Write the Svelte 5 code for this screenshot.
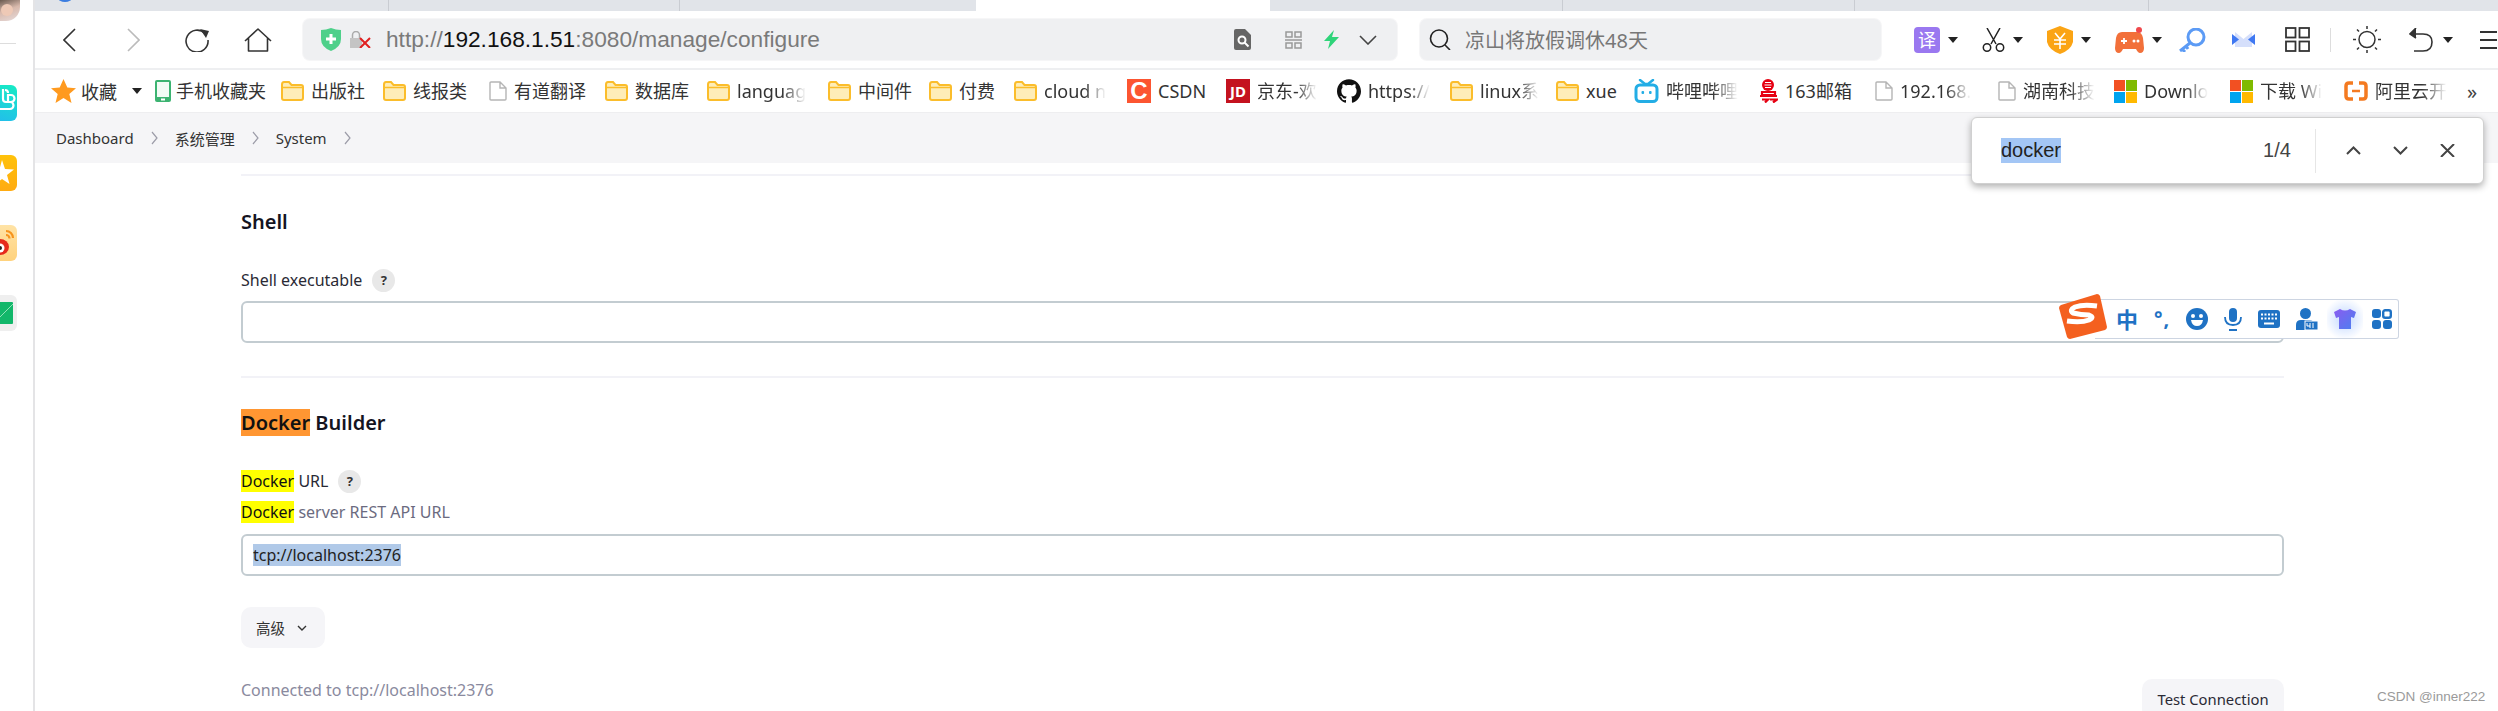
<script lang="ts">
	const bookmarks = [
		{ icon: 'phone', label: '手机收藏夹', w: 126 },
		{ icon: 'folder', label: '出版社', w: 102 },
		{ icon: 'folder', label: '线报类', w: 106 },
		{ icon: 'file', label: '有道翻译', w: 116 },
		{ icon: 'folder', label: '数据库', w: 102 },
		{ icon: 'folder', label: 'languag', w: 121, fade: true },
		{ icon: 'folder', label: '中间件', w: 101 },
		{ icon: 'folder', label: '付费', w: 85 },
		{ icon: 'folder', label: 'cloud n', w: 113, fade: true },
		{ icon: 'csdn', label: 'CSDN', w: 99 },
		{ icon: 'jd', label: '京东-欢', w: 111, fade: true },
		{ icon: 'github', label: 'https://', w: 113, fade: true },
		{ icon: 'folder', label: 'linux系', w: 106, fade: true },
		{ icon: 'folder', label: 'xue', w: 78 },
		{ icon: 'bili', label: '哔哩哔哩', w: 125, fade: true },
		{ icon: 'mail163', label: '163邮箱', w: 116 },
		{ icon: 'file', label: '192.168.', w: 123, fade: true },
		{ icon: 'file', label: '湖南科技', w: 116, fade: true },
		{ icon: 'ms', label: 'Downlo', w: 116, fade: true },
		{ icon: 'ms', label: '下载 Wi', w: 114, fade: true },
		{ icon: 'ali', label: '阿里云开', w: 125, fade: true }
	];
</script>

{#snippet caret()}
	<svg class="caret" width="10" height="6" viewBox="0 0 10 6"><path d="M0 0h10L5 6z" fill="#222" /></svg>
{/snippet}

{#snippet bookmarkIcon(kind: string)}
	{#if kind === 'folder'}
		<svg width="23" height="20" viewBox="0 0 23 20">
			<path d="M1 3.500Q1 1 3 1h5l2.500 3H20q2 0 2 2v11q0 2-2 2H3q-2 0-2-2z" fill="#feedb8" stroke="#fbbd2b" stroke-width="2" />
			<path d="M1 6.500h21" stroke="#fbbd2b" stroke-width="1.500" />
		</svg>
	{:else if kind === 'file'}
		<svg width="18" height="20" viewBox="0 0 18 20">
			<path d="M1 2q0-1 1-1h9l6 6v11q0 1-1 1H2q-1 0-1-1z M11 1v6h6" fill="#fff" stroke="#b5b5b5" stroke-width="1.400" />
		</svg>
	{:else if kind === 'phone'}
		<svg width="16" height="22" viewBox="0 0 16 22">
			<rect width="16" height="22" rx="2" fill="#3cb371" />
			<rect x="2" y="2" width="12" height="15" fill="#f2fbf5" />
			<rect x="6" y="18.500" width="4" height="2" fill="#fff" />
		</svg>
	{:else if kind === 'csdn'}
		<div class="tile csdn">C</div>
	{:else if kind === 'jd'}
		<div class="tile jd">JD</div>
	{:else if kind === 'github'}
		<svg width="24" height="24" viewBox="0 0 24 24"><path fill="#111" d="M12 .297c-6.63 0-12 5.373-12 12 0 5.303 3.438 9.8 8.205 11.385.6.113.82-.258.82-.577 0-.285-.01-1.04-.015-2.04-3.338.724-4.042-1.61-4.042-1.61C4.422 18.07 3.633 17.7 3.633 17.7c-1.087-.744.084-.729.084-.729 1.205.084 1.838 1.236 1.838 1.236 1.07 1.835 2.809 1.305 3.495.998.108-.776.417-1.305.76-1.605-2.665-.3-5.466-1.332-5.466-5.93 0-1.31.465-2.38 1.235-3.22-.135-.303-.54-1.523.105-3.176 0 0 1.005-.322 3.3 1.23.96-.267 1.98-.399 3-.405 1.02.006 2.04.138 3 .405 2.28-1.552 3.285-1.23 3.285-1.23.645 1.653.24 2.873.12 3.176.765.84 1.23 1.91 1.23 3.22 0 4.61-2.805 5.625-5.475 5.92.42.36.81 1.096.81 2.22 0 1.606-.015 2.896-.015 3.286 0 .315.21.69.825.57C20.565 22.092 24 17.592 24 12.297c0-6.627-5.373-12-12-12" /></svg>
	{:else if kind === 'bili'}
		<svg width="25" height="24" viewBox="0 0 25 24">
			<path d="M6 1l5 4h3l5-4" fill="none" stroke="#23ade5" stroke-width="2.500" stroke-linecap="round" />
			<rect x="2" y="6" width="21" height="16.500" rx="4" fill="#fff" stroke="#23ade5" stroke-width="3" />
			<rect x="7.500" y="12" width="2.600" height="3" rx="1" fill="#23ade5" />
			<rect x="15" y="12" width="2.600" height="3" rx="1" fill="#23ade5" />
		</svg>
	{:else if kind === 'mail163'}
		<svg width="19" height="24" viewBox="0 0 19 24">
			<circle cx="9" cy="6" r="6" fill="#e60012" />
			<path d="M5.500 6h7M6 8.500h6M6 3.500h6" stroke="#fff" stroke-width="1.200" />
			<path d="M3 13h13v3H3zM1 17h17M3 20.500h6l-3 3M11 20.500h7l-4 3" fill="none" stroke="#e60012" stroke-width="2.200" />
		</svg>
	{:else if kind === 'ms'}
		<svg width="23" height="23" viewBox="0 0 23 23">
			<rect width="11" height="11" fill="#f25022" />
			<rect x="12" width="11" height="11" fill="#7fba00" />
			<rect y="12" width="11" height="11" fill="#00a4ef" />
			<rect x="12" y="12" width="11" height="11" fill="#ffb900" />
		</svg>
	{:else if kind === 'ali'}
		<svg width="24" height="22" viewBox="0 0 24 22">
			<path d="M9 3H5Q2 3 2 6v10q0 3 3 3h4M15 3h4q3 0 3 3v10q0 3-3 3h-4" fill="none" stroke="#f47a20" stroke-width="3.500" />
			<path d="M8 11h8" stroke="#f47a20" stroke-width="2.500" />
		</svg>
	{/if}
{/snippet}

<div class="shell">
	<aside class="rail">
		<div class="avatar"><div class="face"></div></div>
		<div class="rail-rule"></div>
		<div class="rail-apps">
			<div class="app-tile cyan">
				<svg width="17" height="36" viewBox="0 0 17 36" fill="none" stroke="#fff" stroke-width="2.200">
					<path d="M3 4v10a3 3 0 0 0 3 3h4a3 3 0 0 1 0 7H0" />
					<path d="M8 8q0-3-3-3M10 17h1a3.500 3.500 0 0 0 0-7H8v7" />
				</svg>
			</div>
			<div class="app-tile amber">
				<svg width="17" height="36" viewBox="0 0 17 36"><path d="M2 5l3 9 9 .5-7 5.500 2.500 9L2 24l-7 5 2.500-9-7-5.500 9-.5z" fill="#fff" /></svg>
			</div>
			<div class="app-tile peach">
				<svg width="17" height="36" viewBox="0 0 17 36">
					<path d="M6 6a7 7 0 0 1 7 7M6 10a3.500 3.500 0 0 1 3.500 3.500" fill="none" stroke="#f7941d" stroke-width="2.200" />
					<ellipse cx="0" cy="22" rx="9" ry="8" fill="#e6291b" />
					<circle cx="0" cy="23" r="4.500" fill="#fff" />
					<circle cx="0" cy="23" r="2" fill="#222" />
				</svg>
			</div>
			<div class="app-tile pale">
				<svg width="13" height="22" viewBox="0 0 13 22">
					<path d="M0 0h12q1 0 1 1v20q0 1-1 1H0z" fill="#12b76a" />
					<path d="M0 15L13 2" stroke="#8fe3b8" stroke-width="1" />
				</svg>
			</div>
		</div>
	</aside>

	<div class="browser">
		<div class="tabstrip">
			<span class="tab-dot"></span>
			<span class="tab grey" style="width: 354px"></span>
			<span class="tab grey" style="width: 291px"></span>
			<span class="tab plain" style="width: 296px"></span>
			<span class="tab active"></span>
			<span class="tab grey" style="width: 293px"></span>
			<span class="tab grey" style="width: 292px"></span>
			<span class="tab grey" style="width: 294px"></span>
		</div>

		<div class="toolbar">
			<div class="nav">
				<svg class="back" width="13" height="24" viewBox="0 0 13 24"><path d="M12 1L1 12l11 11" fill="none" stroke="#333" stroke-width="1.600" /></svg>
				<svg class="forward" width="13" height="24" viewBox="0 0 13 24"><path d="M1 1l11 11L1 23" fill="none" stroke="#bbb" stroke-width="1.600" /></svg>
				<svg class="reload" width="25" height="24" viewBox="0 0 25 24">
					<path d="M20 5.500A11 11 0 1 0 23 12" fill="none" stroke="#333" stroke-width="1.600" />
					<path d="M15 1l9 2-3 7z" fill="#333" />
				</svg>
				<svg class="home" width="28" height="24" viewBox="0 0 28 24"><path d="M1 13L14 1l13 12M4.500 10v13h19V10" fill="none" stroke="#333" stroke-width="1.600" stroke-linejoin="round" /></svg>
			</div>

			<div class="urlbar">
				<svg class="shield" width="20" height="23" viewBox="0 0 20 23">
					<path d="M0 2q5 0 10-2 5 2 10 2v9q0 8-10 12Q0 19 0 11z" fill="#4ed08a" />
					<path d="M10 6v10M5 11h10" stroke="#fff" stroke-width="3" />
				</svg>
				<svg class="lock" width="21" height="17" viewBox="0 0 21 17">
					<rect x="0" y="7" width="12" height="10" fill="#c4c4c4" />
					<path d="M2.500 7V4a3.500 3.500 0 0 1 7 0v3" fill="none" stroke="#aaa" stroke-width="1.500" />
					<path d="M10 7l10 10M20 7L10 17" stroke="#e02020" stroke-width="2" />
				</svg>
				<span class="url"><span class="dim">http://</span><span class="host">192.168.1.51</span><span class="dim">:8080/manage/configure</span></span>
				<div class="url-tools">
					<svg width="17" height="21" viewBox="0 0 17 21">
						<path d="M0 2q0-2 2-2h9l6 6v13q0 2-2 2H2q-2 0-2-2z" fill="#666" />
						<circle cx="8" cy="11" r="3.500" fill="none" stroke="#fff" stroke-width="2" />
						<path d="M10.500 13.500l4 4" stroke="#fff" stroke-width="2" />
					</svg>
					<svg width="17" height="18" viewBox="0 0 17 18" fill="none" stroke="#999" stroke-width="1.500">
						<rect x="1" y="1" width="6" height="5" />
						<rect x="10" y="1" width="6" height="5" />
						<path d="M0 9h17" />
						<rect x="1" y="12" width="6" height="5" />
						<rect x="10" y="12" width="6" height="5" />
					</svg>
					<svg width="15" height="19" viewBox="0 0 15 19"><path d="M10 0L0 11h6l-2 8 11-12H8z" fill="#2fd47a" /></svg>
					<svg width="18" height="10" viewBox="0 0 18 10"><path d="M1 1l8 8 8-8" fill="none" stroke="#444" stroke-width="1.600" /></svg>
				</div>
			</div>

			<div class="searchbar">
				<svg width="23" height="21" viewBox="0 0 23 21" fill="none" stroke="#222" stroke-width="1.600">
					<ellipse cx="10" cy="9.500" rx="8.500" ry="8.500" />
					<path d="M16 16l5 5" />
				</svg>
				<span>凉山将放假调休48天</span>
			</div>

			<div class="extensions">
				<div class="ext-item">
					<div class="ext-translate">译</div>
					{@render caret()}
				</div>
				<div class="ext-item">
					<svg width="23" height="24" viewBox="0 0 23 24" fill="none" stroke="#222" stroke-width="1.500">
						<path d="M5 0l9 16M18 0L9 16" />
						<circle cx="5" cy="19.500" r="3.700" />
						<circle cx="18" cy="19.500" r="3.700" />
					</svg>
					{@render caret()}
				</div>
				<div class="ext-item">
					<svg width="26" height="28" viewBox="0 0 26 28">
						<path d="M13 0l13 5v11q-2 8-13 12Q2 24 0 16V5z" fill="#fba414" />
						<path d="M8 7l5 6 5-6M7 14h12M7 18h12M13 13v10" fill="none" stroke="#fff" stroke-width="1.600" />
					</svg>
					{@render caret()}
				</div>
				<div class="ext-item">
					<svg width="29" height="26" viewBox="0 0 29 26">
						<path d="M7 5h15q5 0 6 6l1 10q0 5-4 5-2 0-4-4H8q-2 4-4 4-4 0-4-5l1-10q1-6 6-6z" fill="#f2703a" />
						<circle cx="24" cy="3" r="3" fill="#f0484c" />
						<path d="M6 14h6M9 11v6" stroke="#fff" stroke-width="1.800" />
						<circle cx="19" cy="14" r="1.500" fill="#fff" />
						<circle cx="23" cy="14" r="1.500" fill="#fff" />
					</svg>
					{@render caret()}
				</div>
				<svg class="ext-key" width="28" height="24" viewBox="0 0 28 24" fill="none" stroke="#5c9bf5" stroke-width="3">
					<circle cx="18" cy="9" r="8" />
					<path d="M12 15L2 23M4 21l3 3M8 18l2 3" />
				</svg>
				<svg class="ext-bow" width="23" height="15" viewBox="0 0 23 15">
					<path d="M3 0l8.500 7L20 0v15H3z" fill="#d5dffb" />
					<path d="M0 2l7 5.500L0 13z" fill="#3f78f2" />
					<path d="M23 2l-7 5.500 7 5.500z" fill="#3f78f2" />
				</svg>
				<svg class="ext-grid" width="25" height="25" viewBox="0 0 25 25" fill="none" stroke="#333" stroke-width="1.800">
					<rect x="1" y="1" width="9.500" height="9.500" />
					<rect x="14.500" y="1" width="9.500" height="9.500" />
					<rect x="1" y="14.500" width="9.500" height="9.500" />
					<rect x="14.500" y="14.500" width="9.500" height="9.500" />
				</svg>
				<span class="ext-sep"></span>
				<svg class="ext-sun" width="28" height="27" viewBox="0 0 28 27" fill="none" stroke="#333" stroke-width="1.500">
					<circle cx="14" cy="13.500" r="8" />
					<path d="M14 0v3M14 24v3M0 13.500h3M25 13.500h3M4 3.500l2 2M22 21.500l2 2M24 3.500l-2 2M6 21.500l-2 2" />
				</svg>
				<div class="ext-item undo">
					<svg width="26" height="24" viewBox="0 0 26 24" fill="none" stroke="#333" stroke-width="1.600">
						<path d="M2 6h12q9 0 9 8 0 9-9 9H5" />
						<path d="M7 0L1 6l6 4" fill="#333" />
					</svg>
					{@render caret()}
				</div>
				<div class="ext-menu"><span></span><span></span><span></span></div>
			</div>
		</div>

		<div class="bookmarks">
			<div class="bm-favorites">
				<svg width="25" height="24" viewBox="0 0 25 24"><path d="M12.500 0l3.800 8.600 8.700.6-6.700 5.700 2.200 9.100-8-4.900-8 4.900 2.200-9.100L0 9.200l8.700-.6z" fill="#ff9a1f" /></svg>
				<span>收藏</span>
				{@render caret()}
			</div>
			{#each bookmarks as b}
				<div class="bm" style="width: {b.w}px">
					<span class="bm-icon" class:tight={b.icon === 'phone'}>{@render bookmarkIcon(b.icon)}</span>
					<span class="bm-label" class:fade={b.fade}>{b.label}</span>
				</div>
			{/each}
			<span class="bm-more">»</span>
		</div>

		<div class="breadcrumbs">
			<span>Dashboard</span>
			<svg width="7" height="14" viewBox="0 0 7 14"><path d="M1 1l5 6-5 6" fill="none" stroke="#9c9ca8" stroke-width="1.200" /></svg>
			<span>系统管理</span>
			<svg width="7" height="14" viewBox="0 0 7 14"><path d="M1 1l5 6-5 6" fill="none" stroke="#9c9ca8" stroke-width="1.200" /></svg>
			<span>System</span>
			<svg width="7" height="14" viewBox="0 0 7 14"><path d="M1 1l5 6-5 6" fill="none" stroke="#9c9ca8" stroke-width="1.200" /></svg>
		</div>

		<main class="config">
			<div class="top-rule"></div>

			<h2 class="heading">Shell</h2>
			<div class="label-row">
				<span>Shell executable</span>
				<span class="help">?</span>
			</div>
			<div class="field"></div>

			<div class="section-rule"></div>

			<h2 class="heading second"><mark class="current">Docker</mark> Builder</h2>
			<div class="label-row">
				<span><mark>Docker</mark> URL</span>
				<span class="help">?</span>
			</div>
			<div class="description"><mark>Docker</mark> server REST API URL</div>
			<div class="field filled"><span class="selected">tcp://localhost:2376</span></div>

			<button class="advanced">
				高级
				<svg width="10" height="6" viewBox="0 0 10 6"><path d="M1 1l4 4 4-4" fill="none" stroke="#333" stroke-width="1.400" /></svg>
			</button>

			<div class="status-row">
				<span class="status">Connected to tcp://localhost:2376</span>
				<button class="test">Test Connection</button>
			</div>
		</main>
	</div>
</div>

<div class="findbar">
	<span class="find-query">docker</span>
	<span class="find-count">1/4</span>
	<span class="find-sep"></span>
	<svg width="15" height="9" viewBox="0 0 15 9"><path d="M1 8l6.500-6.500L14 8" fill="none" stroke="#444" stroke-width="2" /></svg>
	<svg width="15" height="9" viewBox="0 0 15 9"><path d="M1 1l6.500 6.500L14 1" fill="none" stroke="#444" stroke-width="2" /></svg>
	<svg width="15" height="13" viewBox="0 0 15 13"><path d="M1 0l13 13M14 0L1 13" stroke="#444" stroke-width="2" /></svg>
</div>

<div class="ime">
	<svg class="ime-logo" width="48" height="46" viewBox="0 0 48 46">
		<path d="M2 11L38 0q2 0 3 2l7 31q0 2-2 3L11 45q-2 0-3-2L0 14q0-2 2-3z" fill="#f4601f" />
		<path d="M38 12q-14-2-22 1-6 3-2 6 8 2 16 2 6 2 0 5-8 3-22 1" fill="none" stroke="#fff" stroke-width="5" />
	</svg>
	<span class="ime-zh">中</span>
	<span class="ime-punct">°,</span>
	<svg width="22" height="22" viewBox="0 0 22 22">
		<circle cx="11" cy="11" r="11" fill="#1f72c4" />
		<circle cx="7" cy="8" r="2" fill="#fff" />
		<circle cx="15" cy="8" r="2" fill="#fff" />
		<path d="M5 12h12q-1 6-6 6t-6-6z" fill="#fff" />
	</svg>
	<svg width="18" height="23" viewBox="0 0 18 23">
		<rect x="5" y="0" width="8" height="14" rx="4" fill="#1f72c4" />
		<path d="M1 9q0 8 8 8t8-8" fill="none" stroke="#1f72c4" stroke-width="1.800" />
		<path d="M5 22h8" stroke="#1f72c4" stroke-width="2" />
	</svg>
	<svg width="22" height="18" viewBox="0 0 22 18">
		<rect width="22" height="18" rx="3" fill="#1f72c4" />
		<path d="M3 4.500h16M3 8.500h16" stroke="#fff" stroke-width="2" stroke-dasharray="2 1.500" />
		<path d="M6 13.500h10" stroke="#fff" stroke-width="2" />
	</svg>
	<svg width="22" height="22" viewBox="0 0 22 22">
		<circle cx="9.500" cy="5.500" r="5.500" fill="#1f72c4" />
		<path d="M0 22v-5q0-5 5-5h9q3 0 3 3v7z" fill="#1f72c4" />
		<rect x="9" y="13" width="13" height="9" fill="#1f72c4" stroke="#fff" />
		<path d="M11 15v3h3M14 15v5M17 15v5" stroke="#fff" stroke-width="1" fill="none" />
	</svg>
	<div class="ime-skin">
		<svg width="22" height="20" viewBox="0 0 22 20">
			<defs><linearGradient id="shirt" x1="0" y1="0" x2="1" y2="1"><stop offset="0" stop-color="#8b5cf0" /><stop offset="1" stop-color="#4a80f0" /></linearGradient></defs>
			<path d="M0 3l6-3q5 3 10 0l6 3-2 6-3-1v12H5V8L2 9z" fill="url(#shirt)" />
		</svg>
	</div>
	<svg width="20" height="20" viewBox="0 0 20 20" fill="#1f72c4">
		<rect width="9" height="9" rx="3" />
		<rect x="11.200" y="1.200" width="7.600" height="7.600" rx="2" fill="none" stroke="#1f72c4" stroke-width="2.400" />
		<rect y="11" width="9" height="9" rx="3" />
		<rect x="11" y="11" width="9" height="9" rx="3" />
	</svg>
</div>

<div class="watermark">CSDN @inner222</div>

<style>
	:global(body) {
		margin: 0;
		width: 2498px;
		height: 711px;
		overflow: hidden;
		background: #fff;
		font-family: "Noto Sans", "Noto Sans CJK SC", sans-serif;
		color: #222;
	}

	.shell {
		display: flex;
		width: 2498px;
		height: 711px;
		overflow: hidden;
	}

	/* left rail of the browser */
	.rail {
		flex: 0 0 35px;
		box-sizing: border-box;
		border-right: 2px solid #e4e4e6;
		overflow: hidden;
	}

	.avatar {
		width: 20px;
		height: 21px;
		background: linear-gradient(160deg, #6a5a50 0%, #d8b9ac 45%, #e7dcdc 100%);
		border-radius: 0 0 14px 0;
		overflow: hidden;
	}

	.face {
		width: 12px;
		height: 12px;
		margin: 4px 0 0 1px;
		background: #eec9b6;
		border-radius: 50%;
	}

	.rail-rule {
		width: 16px;
		height: 1px;
		margin-top: 22px;
		background: #ddd;
	}

	.rail-apps {
		display: flex;
		flex-direction: column;
		gap: 34px;
		margin-top: 41px;
	}

	.app-tile {
		display: flex;
		align-items: center;
		justify-content: flex-start;
		width: 17px;
		height: 36px;
		border-radius: 0 6px 6px 0;
		overflow: hidden;
	}

	.cyan { background: linear-gradient(20deg, #22bfea, #17ecc4); }
	.amber { background: linear-gradient(180deg, #ffc20a, #ffab12); }
	.peach { background: linear-gradient(180deg, #ffe3a6, #ffd27d); }
	.pale { background: #efefef; }

	.browser {
		flex: 1;
		min-width: 0;
		display: flex;
		flex-direction: column;
	}

	.tabstrip {
		position: relative;
		display: flex;
		flex: 0 0 11px;
		background: #e1e4e9;
	}

	.tab {
		box-sizing: border-box;
		height: 11px;
	}

	.tab.grey {
		border-right: 1px solid #c9ccd2;
	}

	.tab.active {
		width: 294px;
		background: #fff;
	}

	.tab-dot {
		position: absolute;
		left: 23px;
		top: -6px;
		width: 14px;
		height: 8px;
		border-radius: 50%;
		background: #3b7de0;
	}

	/* address bar row */
	.toolbar {
		display: flex;
		align-items: center;
		flex: 0 0 57px;
		box-sizing: border-box;
		background: #fff;
	}

	.nav {
		display: flex;
		align-items: center;
		flex: 0 0 268px;
	}

	.nav .back { margin-left: 28px; }
	.nav .forward { margin-left: 51px; }
	.nav .reload { margin-left: 45px; }
	.nav .home { margin-left: 34px; }

	.urlbar {
		display: flex;
		align-items: center;
		flex: 0 0 1094px;
		box-sizing: border-box;
		height: 41px;
		padding: 0 20px 0 18px;
		background: #eff0f2;
		border-radius: 7px;
		box-shadow: 0 0 0 1px #f6f6f7;
	}

	.lock { margin-left: 9px; }

	.url {
		margin-left: 15px;
		font-size: 22.700px;
		line-height: 41px;
		white-space: nowrap;
		font-family: "Liberation Sans", sans-serif;
	}

	.dim { color: #7a7a7a; }
	.host { color: #111; }

	.url-tools {
		display: flex;
		align-items: center;
		gap: 34px;
		margin-left: auto;
	}

	.url-tools svg:nth-child(3) {
		margin-left: -12px;
	}

	.url-tools svg:nth-child(4) {
		margin-left: -14px;
	}

	.searchbar {
		display: flex;
		align-items: center;
		gap: 13px;
		flex: 0 0 461px;
		box-sizing: border-box;
		height: 41px;
		margin-left: 23px;
		padding-left: 9px;
		background: #eff0f2;
		border-radius: 7px;
		box-shadow: 0 0 0 1px #f6f6f7;
		font-size: 20px;
		color: #777;
	}

	.extensions {
		display: flex;
		align-items: center;
		margin-left: 33px;
	}

	.ext-item {
		display: flex;
		align-items: center;
		gap: 8px;
	}

	.ext-item + .ext-item {
		margin-left: 24px;
	}

	.caret {
		flex: none;
	}

	.ext-translate {
		width: 26px;
		height: 26px;
		border-radius: 4px;
		background: #9a78f0;
		color: #fff;
		font-size: 18px;
		line-height: 26px;
		text-align: center;
	}

	.ext-key { margin-left: 16px; }
	.ext-bow { margin-left: 26px; }
	.ext-grid { margin-left: 30px; }

	.ext-sep {
		width: 1px;
		height: 24px;
		margin-left: 20px;
		background: #ddd;
	}

	.ext-sun { margin-left: 22px; }
	.ext-item.undo { margin-left: 28px; }

	.ext-menu {
		display: flex;
		flex-direction: column;
		gap: 6px;
		width: 17px;
		margin-left: 27px;
	}

	.ext-menu span {
		height: 2px;
		background: #333;
	}

	/* bookmarks row */
	.bookmarks {
		display: flex;
		align-items: center;
		flex: 0 0 42px;
		margin-top: 2px;
		padding-left: 16px;
		background: #fff;
		font-size: 18px;
		white-space: nowrap;
		color: #333;
		box-shadow: 0 -2px 0 #eeeff1;
	}

	.bm-favorites {
		display: flex;
		align-items: center;
		flex: 0 0 104px;
	}

	.bm-favorites span { margin: 0 15px 0 5px; }

	.bm {
		display: flex;
		align-items: center;
		flex: none;
	}

	.bm-icon {
		display: flex;
		align-items: center;
		justify-content: center;
		flex: none;
		min-width: 16px;
		margin-right: 7px;
	}

	.bm-icon.tight {
		margin-right: 5px;
	}

	.bm-label {
		line-height: 24px;
	}

	.bm-label.fade {
		mask-image: linear-gradient(90deg, #000 65%, transparent 100%);
	}

	.tile {
		width: 24px;
		height: 24px;
		line-height: 24px;
		text-align: center;
		color: #fff;
		font-weight: 700;
	}

	.tile.csdn {
		background: #fc5531;
		font-size: 24px;
		font-family: "Liberation Sans", sans-serif;
	}

	.tile.jd {
		background: #c4121f;
		font-size: 15px;
	}

	.bm-more {
		margin-left: -2px;
		font-size: 20px;
		color: #444;
	}

	.breadcrumbs {
		display: flex;
		align-items: center;
		flex: 0 0 51px;
		box-sizing: border-box;
		padding-left: 21px;
		gap: 17px;
		background: #f5f5f7;
		border-top: 1px solid #eeeef0;
		font-size: 15px;
		color: #333;
	}

	/* page body */
	.config {
		box-sizing: border-box;
		width: 2249px;
		padding-left: 206px;
	}

	.top-rule {
		height: 2px;
		margin-top: 11px;
		background: #f2f2f7;
	}

	.heading {
		margin: 32px 0 0;
		font-size: 20px;
		line-height: 28px;
		font-weight: 600;
		color: #14141f;
	}

	.heading.second {
		margin-top: 31px;
	}

	.label-row {
		display: flex;
		align-items: center;
		gap: 10px;
		height: 24px;
		margin-top: 32px;
		font-size: 16px;
		color: #2a2a35;
	}

	.help {
		width: 23px;
		height: 23px;
		border-radius: 50%;
		background: #e8e8e8;
		color: #333;
		font-size: 13px;
		font-weight: 700;
		line-height: 23px;
		text-align: center;
	}

	mark {
		background: #ffff00;
		color: #111;
	}

	mark.current {
		background: #ff9632;
	}

	.description {
		margin-top: 9px;
		font-size: 16px;
		line-height: 20px;
		color: #6b6b80;
	}

	.field {
		box-sizing: border-box;
		height: 42px;
		margin-top: 9px;
		padding-left: 10px;
		border: 2px solid #c3ccd1;
		border-radius: 6px;
		font-size: 16px;
		line-height: 38px;
	}

	.field.filled {
		margin-top: 12px;
	}

	.selected {
		background: #b0c9e8;
		color: #222;
	}

	.section-rule {
		height: 2px;
		margin-top: 33px;
		background: #f2f2f7;
	}

	.advanced {
		display: flex;
		align-items: center;
		gap: 12px;
		box-sizing: border-box;
		height: 41px;
		margin-top: 31px;
		padding: 0 18px 0 15px;
		border: 0;
		border-radius: 10px;
		background: #f5f5f8;
		font: inherit;
		font-size: 14.500px;
		color: #333;
	}

	.status-row {
		display: flex;
		justify-content: space-between;
		margin-top: 31px;
	}

	.status {
		font-size: 16px;
		line-height: 22px;
		color: #8a8a9e;
	}

	.test {
		box-sizing: border-box;
		width: 142px;
		height: 40px;
		border: 0;
		border-radius: 10px;
		background: #f5f5f8;
		font: inherit;
		font-size: 14.800px;
		color: #2a2a35;
	}

	/* overlays */
	.findbar {
		position: absolute;
		left: 1971px;
		top: 117px;
		display: flex;
		align-items: center;
		box-sizing: border-box;
		width: 513px;
		height: 67px;
		padding-left: 29px;
		background: #fff;
		border: 1px solid #d0d0d0;
		border-radius: 6px;
		box-shadow: 0 3px 7px rgba(0, 0, 0, 0.3);
		font-family: "Liberation Sans", sans-serif;
		font-size: 20px;
		color: #444;
	}

	.find-query {
		background: #a3c6f5;
		color: #222;
		line-height: 25px;
	}

	.find-count {
		margin-left: 202px;
	}

	.find-sep {
		width: 1px;
		height: 44px;
		margin: 0 30px 0 24px;
		background: #e6e6e6;
	}

	.findbar svg + svg {
		margin-left: 32px;
	}

	.ime {
		position: absolute;
		left: 2095px;
		top: 299px;
		display: flex;
		align-items: center;
		gap: 16px;
		box-sizing: border-box;
		width: 304px;
		height: 40px;
		padding-left: 21px;
		background: #fff;
		border: 1px solid #cdd5e2;
		border-left: 0;
		border-radius: 0 3px 3px 0;
	}

	.ime-logo {
		position: absolute;
		left: -36px;
		top: -6px;
	}

	.ime-zh {
		color: #1f72c4;
		font-size: 22px;
		font-weight: 700;
		line-height: 24px;
	}

	.ime-punct {
		color: #1f72c4;
		font-size: 20px;
		font-weight: 700;
		letter-spacing: 1px;
		line-height: 24px;
	}

	.ime-skin {
		display: flex;
		align-items: center;
		justify-content: center;
		width: 36px;
		height: 38px;
		margin: 0 -7px;
		background: radial-gradient(circle, #d8e6ff 30%, #fff 80%);
	}

	.watermark {
		position: absolute;
		left: 2377px;
		top: 689px;
		font-family: "Liberation Sans", sans-serif;
		font-size: 13.500px;
		line-height: 16px;
		color: #9a9a9a;
	}
</style>
